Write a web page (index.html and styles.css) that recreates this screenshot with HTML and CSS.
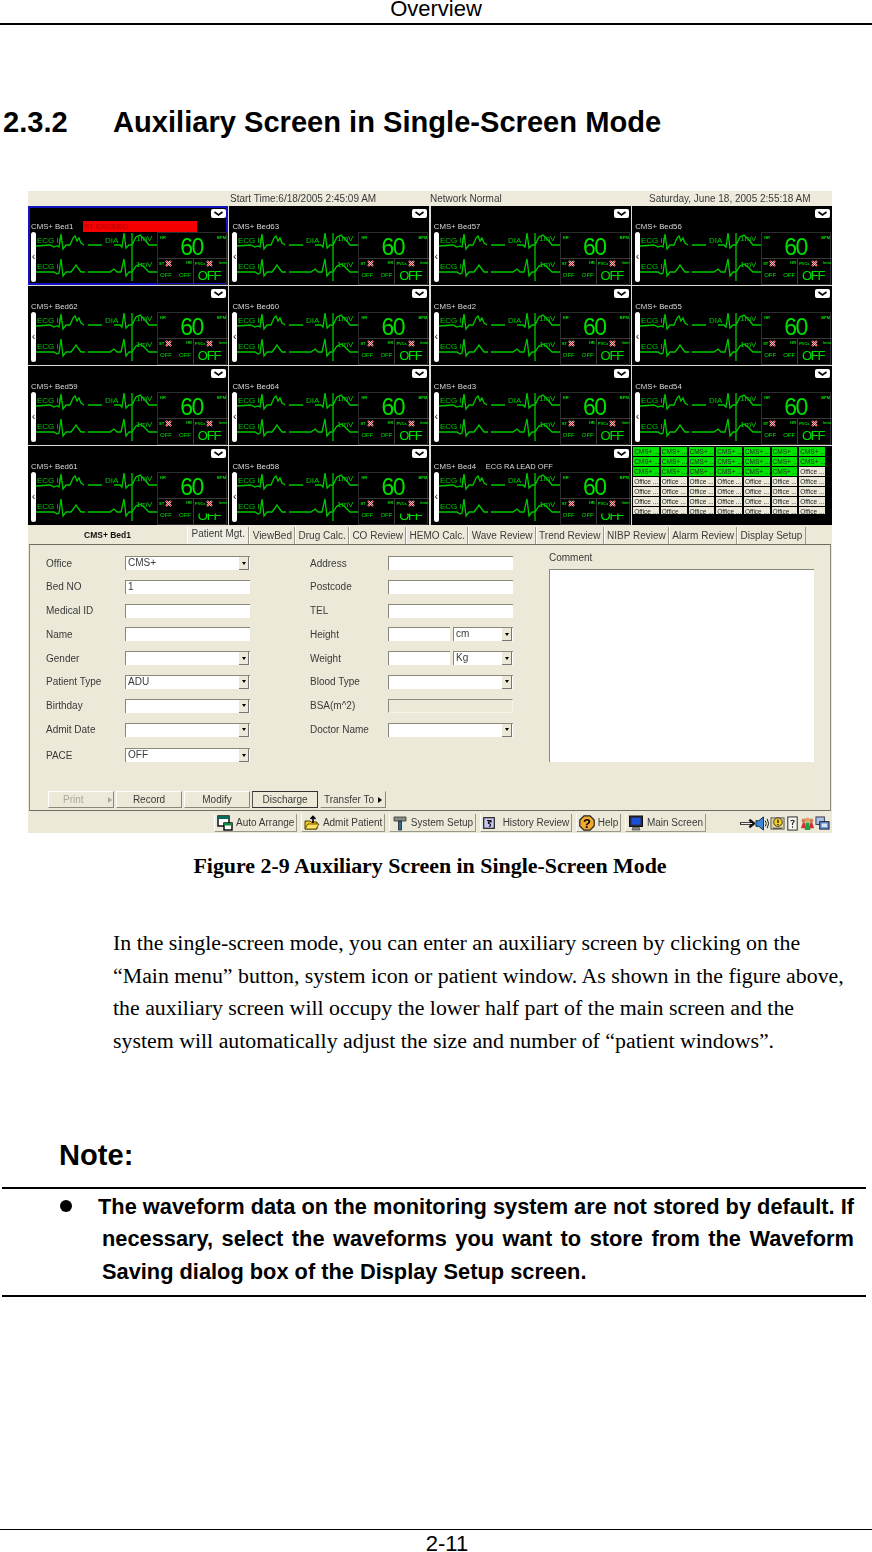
FILE: index.html
```html
<!DOCTYPE html>
<html lang="en">
<head>
    <meta charset="UTF-8">
    <meta name="viewport" content="width=device-width, initial-scale=1.0">
    <title>Overview</title>
    <link rel="stylesheet" href="styles.css">
</head>
<body>
    <svg class="defs" width="0" height="0">
        <symbol id="ecg" viewBox="0 0 121 50">
            <path d="M0 14L14 13L18 15L21 14L23 15L25 2L27 17L30 13L34 13L37 6L39 4L41 9L43 6L45 11L48 13M52 13L66 13M78 13L84 13L86 15L88 1L90 16L93 13L96 13L100 5L104 3L109 8L113 13L121 13M0 40L18 40L21 42L23 41L25 27L27 44L30 40L35 40L38 36L40 33L42 36L45 40L49 40M52 40L74 40L78 37L81 40L85 40L88 27L90 44L93 40L96 40L100 34L104 32L108 35L113 40L121 40M96 1V49" fill="none" stroke="#00c800" stroke-width="1.3"/>
        </symbol>
        <symbol id="chev" viewBox="0 0 15 9">
            <rect width="15" height="9" rx="2" fill="#fff"/>
            <path d="M3.5 3L7.5 6L11.5 3" fill="none" stroke="#000" stroke-width="1.6"/>
        </symbol>
        <symbol id="x" viewBox="0 0 7 7">
            <path d="M1 1L6 6M6 1L1 6" stroke="#f4c8c8" stroke-width="2"/>
            <path d="M1 1L6 6M6 1L1 6" stroke="#e02020" stroke-width="1"/>
        </symbol>
    </svg>

    <header class="page-head">Overview</header>

    <h2 class="section-title"><span class="section-num">2.3.2</span><span>Auxiliary Screen in Single-Screen Mode</span></h2>

    <div class="shot">
        <div class="shot-top">
            <span></span>
            <span>Start Time:6/18/2005 2:45:09 AM</span>
            <span>Network Normal</span>
            <span>Saturday, June 18, 2005 2:55:18 AM</span>
        </div>

        <div class="beds">
            <div class="tile sel">
                <svg class="chev"><use href="#chev"/></svg>
                <div class="tile-name"><span>CMS+ Bed1</span><span class="alert">ST EXCEED</span></div>
                <div class="tile-body"><div class="pill">‹</div><svg class="wave" viewBox="0 0 121 50"><use href="#ecg"/><text x="1" y="11">ECG II</text><text x="69" y="11">DIA</text><text x="100" y="9">1mV</text><text x="1" y="37">ECG I</text><text x="100" y="35">1mV</text></svg>
                <div class="vitals"><div class="hr"><i>HR</i><b>60</b><i>BPM</i></div><div class="low"><p><i>ST<svg class="x"><use href="#x"/></svg></i><i>HR</i></p><p><span>OFF</span><span>OFF</span></p></div><div class="low"><p><i>PVCs<svg class="x"><use href="#x"/></svg></i><i>/min</i></p><strong>OFF</strong></div></div></div>
            </div>
            <div class="tile">
                <svg class="chev"><use href="#chev"/></svg>
                <div class="tile-name"><span>CMS+ Bed63</span></div>
                <div class="tile-body"><div class="pill">‹</div><svg class="wave" viewBox="0 0 121 50"><use href="#ecg"/><text x="1" y="11">ECG II</text><text x="69" y="11">DIA</text><text x="100" y="9">1mV</text><text x="1" y="37">ECG I</text><text x="100" y="35">1mV</text></svg>
                <div class="vitals"><div class="hr"><i>HR</i><b>60</b><i>BPM</i></div><div class="low"><p><i>ST<svg class="x"><use href="#x"/></svg></i><i>HR</i></p><p><span>OFF</span><span>OFF</span></p></div><div class="low"><p><i>PVCs<svg class="x"><use href="#x"/></svg></i><i>/min</i></p><strong>OFF</strong></div></div></div>
            </div>
            <div class="tile">
                <svg class="chev"><use href="#chev"/></svg>
                <div class="tile-name"><span>CMS+ Bed57</span></div>
                <div class="tile-body"><div class="pill">‹</div><svg class="wave" viewBox="0 0 121 50"><use href="#ecg"/><text x="1" y="11">ECG II</text><text x="69" y="11">DIA</text><text x="100" y="9">1mV</text><text x="1" y="37">ECG I</text><text x="100" y="35">1mV</text></svg>
                <div class="vitals"><div class="hr"><i>HR</i><b>60</b><i>BPM</i></div><div class="low"><p><i>ST<svg class="x"><use href="#x"/></svg></i><i>HR</i></p><p><span>OFF</span><span>OFF</span></p></div><div class="low"><p><i>PVCs<svg class="x"><use href="#x"/></svg></i><i>/min</i></p><strong>OFF</strong></div></div></div>
            </div>
            <div class="tile">
                <svg class="chev"><use href="#chev"/></svg>
                <div class="tile-name"><span>CMS+ Bed56</span></div>
                <div class="tile-body"><div class="pill">‹</div><svg class="wave" viewBox="0 0 121 50"><use href="#ecg"/><text x="1" y="11">ECG II</text><text x="69" y="11">DIA</text><text x="100" y="9">1mV</text><text x="1" y="37">ECG I</text><text x="100" y="35">1mV</text></svg>
                <div class="vitals"><div class="hr"><i>HR</i><b>60</b><i>BPM</i></div><div class="low"><p><i>ST<svg class="x"><use href="#x"/></svg></i><i>HR</i></p><p><span>OFF</span><span>OFF</span></p></div><div class="low"><p><i>PVCs<svg class="x"><use href="#x"/></svg></i><i>/min</i></p><strong>OFF</strong></div></div></div>
            </div>

            <div class="tile">
                <svg class="chev"><use href="#chev"/></svg>
                <div class="tile-name"><span>CMS+ Bed62</span></div>
                <div class="tile-body"><div class="pill">‹</div><svg class="wave" viewBox="0 0 121 50"><use href="#ecg"/><text x="1" y="11">ECG II</text><text x="69" y="11">DIA</text><text x="100" y="9">1mV</text><text x="1" y="37">ECG I</text><text x="100" y="35">1mV</text></svg>
                <div class="vitals"><div class="hr"><i>HR</i><b>60</b><i>BPM</i></div><div class="low"><p><i>ST<svg class="x"><use href="#x"/></svg></i><i>HR</i></p><p><span>OFF</span><span>OFF</span></p></div><div class="low"><p><i>PVCs<svg class="x"><use href="#x"/></svg></i><i>/min</i></p><strong>OFF</strong></div></div></div>
            </div>
            <div class="tile">
                <svg class="chev"><use href="#chev"/></svg>
                <div class="tile-name"><span>CMS+ Bed60</span></div>
                <div class="tile-body"><div class="pill">‹</div><svg class="wave" viewBox="0 0 121 50"><use href="#ecg"/><text x="1" y="11">ECG II</text><text x="69" y="11">DIA</text><text x="100" y="9">1mV</text><text x="1" y="37">ECG I</text><text x="100" y="35">1mV</text></svg>
                <div class="vitals"><div class="hr"><i>HR</i><b>60</b><i>BPM</i></div><div class="low"><p><i>ST<svg class="x"><use href="#x"/></svg></i><i>HR</i></p><p><span>OFF</span><span>OFF</span></p></div><div class="low"><p><i>PVCs<svg class="x"><use href="#x"/></svg></i><i>/min</i></p><strong>OFF</strong></div></div></div>
            </div>
            <div class="tile">
                <svg class="chev"><use href="#chev"/></svg>
                <div class="tile-name"><span>CMS+ Bed2</span></div>
                <div class="tile-body"><div class="pill">‹</div><svg class="wave" viewBox="0 0 121 50"><use href="#ecg"/><text x="1" y="11">ECG II</text><text x="69" y="11">DIA</text><text x="100" y="9">1mV</text><text x="1" y="37">ECG I</text><text x="100" y="35">1mV</text></svg>
                <div class="vitals"><div class="hr"><i>HR</i><b>60</b><i>BPM</i></div><div class="low"><p><i>ST<svg class="x"><use href="#x"/></svg></i><i>HR</i></p><p><span>OFF</span><span>OFF</span></p></div><div class="low"><p><i>PVCs<svg class="x"><use href="#x"/></svg></i><i>/min</i></p><strong>OFF</strong></div></div></div>
            </div>
            <div class="tile">
                <svg class="chev"><use href="#chev"/></svg>
                <div class="tile-name"><span>CMS+ Bed55</span></div>
                <div class="tile-body"><div class="pill">‹</div><svg class="wave" viewBox="0 0 121 50"><use href="#ecg"/><text x="1" y="11">ECG II</text><text x="69" y="11">DIA</text><text x="100" y="9">1mV</text><text x="1" y="37">ECG I</text><text x="100" y="35">1mV</text></svg>
                <div class="vitals"><div class="hr"><i>HR</i><b>60</b><i>BPM</i></div><div class="low"><p><i>ST<svg class="x"><use href="#x"/></svg></i><i>HR</i></p><p><span>OFF</span><span>OFF</span></p></div><div class="low"><p><i>PVCs<svg class="x"><use href="#x"/></svg></i><i>/min</i></p><strong>OFF</strong></div></div></div>
            </div>

            <div class="tile">
                <svg class="chev"><use href="#chev"/></svg>
                <div class="tile-name"><span>CMS+ Bed59</span></div>
                <div class="tile-body"><div class="pill">‹</div><svg class="wave" viewBox="0 0 121 50"><use href="#ecg"/><text x="1" y="11">ECG II</text><text x="69" y="11">DIA</text><text x="100" y="9">1mV</text><text x="1" y="37">ECG I</text><text x="100" y="35">1mV</text></svg>
                <div class="vitals"><div class="hr"><i>HR</i><b>60</b><i>BPM</i></div><div class="low"><p><i>ST<svg class="x"><use href="#x"/></svg></i><i>HR</i></p><p><span>OFF</span><span>OFF</span></p></div><div class="low"><p><i>PVCs<svg class="x"><use href="#x"/></svg></i><i>/min</i></p><strong>OFF</strong></div></div></div>
            </div>
            <div class="tile">
                <svg class="chev"><use href="#chev"/></svg>
                <div class="tile-name"><span>CMS+ Bed64</span></div>
                <div class="tile-body"><div class="pill">‹</div><svg class="wave" viewBox="0 0 121 50"><use href="#ecg"/><text x="1" y="11">ECG II</text><text x="69" y="11">DIA</text><text x="100" y="9">1mV</text><text x="1" y="37">ECG I</text><text x="100" y="35">1mV</text></svg>
                <div class="vitals"><div class="hr"><i>HR</i><b>60</b><i>BPM</i></div><div class="low"><p><i>ST<svg class="x"><use href="#x"/></svg></i><i>HR</i></p><p><span>OFF</span><span>OFF</span></p></div><div class="low"><p><i>PVCs<svg class="x"><use href="#x"/></svg></i><i>/min</i></p><strong>OFF</strong></div></div></div>
            </div>
            <div class="tile">
                <svg class="chev"><use href="#chev"/></svg>
                <div class="tile-name"><span>CMS+ Bed3</span></div>
                <div class="tile-body"><div class="pill">‹</div><svg class="wave" viewBox="0 0 121 50"><use href="#ecg"/><text x="1" y="11">ECG II</text><text x="69" y="11">DIA</text><text x="100" y="9">1mV</text><text x="1" y="37">ECG I</text><text x="100" y="35">1mV</text></svg>
                <div class="vitals"><div class="hr"><i>HR</i><b>60</b><i>BPM</i></div><div class="low"><p><i>ST<svg class="x"><use href="#x"/></svg></i><i>HR</i></p><p><span>OFF</span><span>OFF</span></p></div><div class="low"><p><i>PVCs<svg class="x"><use href="#x"/></svg></i><i>/min</i></p><strong>OFF</strong></div></div></div>
            </div>
            <div class="tile">
                <svg class="chev"><use href="#chev"/></svg>
                <div class="tile-name"><span>CMS+ Bed54</span></div>
                <div class="tile-body"><div class="pill">‹</div><svg class="wave" viewBox="0 0 121 50"><use href="#ecg"/><text x="1" y="11">ECG II</text><text x="69" y="11">DIA</text><text x="100" y="9">1mV</text><text x="1" y="37">ECG I</text><text x="100" y="35">1mV</text></svg>
                <div class="vitals"><div class="hr"><i>HR</i><b>60</b><i>BPM</i></div><div class="low"><p><i>ST<svg class="x"><use href="#x"/></svg></i><i>HR</i></p><p><span>OFF</span><span>OFF</span></p></div><div class="low"><p><i>PVCs<svg class="x"><use href="#x"/></svg></i><i>/min</i></p><strong>OFF</strong></div></div></div>
            </div>

            <div class="tile">
                <svg class="chev"><use href="#chev"/></svg>
                <div class="tile-name"><span>CMS+ Bed61</span></div>
                <div class="tile-body"><div class="pill">‹</div><svg class="wave" viewBox="0 0 121 50"><use href="#ecg"/><text x="1" y="11">ECG II</text><text x="69" y="11">DIA</text><text x="100" y="9">1mV</text><text x="1" y="37">ECG I</text><text x="100" y="35">1mV</text></svg>
                <div class="vitals cut"><div class="hr"><i>HR</i><b>60</b><i>BPM</i></div><div class="low"><p><i>ST<svg class="x"><use href="#x"/></svg></i><i>HR</i></p><p><span>OFF</span><span>OFF</span></p></div><div class="low"><p><i>PVCs<svg class="x"><use href="#x"/></svg></i><i>/min</i></p><strong>OFF</strong></div></div></div>
            </div>
            <div class="tile">
                <svg class="chev"><use href="#chev"/></svg>
                <div class="tile-name"><span>CMS+ Bed58</span></div>
                <div class="tile-body"><div class="pill">‹</div><svg class="wave" viewBox="0 0 121 50"><use href="#ecg"/><text x="1" y="11">ECG II</text><text x="69" y="11">DIA</text><text x="100" y="9">1mV</text><text x="1" y="37">ECG I</text><text x="100" y="35">1mV</text></svg>
                <div class="vitals cut"><div class="hr"><i>HR</i><b>60</b><i>BPM</i></div><div class="low"><p><i>ST<svg class="x"><use href="#x"/></svg></i><i>HR</i></p><p><span>OFF</span><span>OFF</span></p></div><div class="low"><p><i>PVCs<svg class="x"><use href="#x"/></svg></i><i>/min</i></p><strong>OFF</strong></div></div></div>
            </div>
            <div class="tile">
                <svg class="chev"><use href="#chev"/></svg>
                <div class="tile-name"><span>CMS+ Bed4</span><span class="lead-off">ECG RA LEAD OFF</span></div>
                <div class="tile-body"><div class="pill">‹</div><svg class="wave" viewBox="0 0 121 50"><use href="#ecg"/><text x="1" y="11">ECG II</text><text x="69" y="11">DIA</text><text x="100" y="9">1mV</text><text x="1" y="37">ECG I</text><text x="100" y="35">1mV</text></svg>
                <div class="vitals cut"><div class="hr"><i>HR</i><b>60</b><i>BPM</i></div><div class="low"><p><i>ST<svg class="x"><use href="#x"/></svg></i><i>HR</i></p><p><span>OFF</span><span>OFF</span></p></div><div class="low"><p><i>PVCs<svg class="x"><use href="#x"/></svg></i><i>/min</i></p><strong>OFF</strong></div></div></div>
            </div>
            <div class="tile bed-list">
                <span class="on">CMS+ ...</span><span class="on">CMS+ ...</span><span class="on">CMS+ ...</span><span class="on">CMS+ ...</span><span class="on">CMS+ ...</span><span class="on">CMS+ ...</span><span class="on">CMS+ ...</span>
                <span class="on">CMS+ ...</span><span class="on">CMS+ ...</span><span class="on">CMS+ ...</span><span class="on">CMS+ ...</span><span class="on">CMS+ ...</span><span class="on">CMS+ ...</span><span class="on">CMS+ ...</span>
                <span class="on">CMS+ ...</span><span class="on">CMS+ ...</span><span class="on">CMS+ ...</span><span class="on">CMS+ ...</span><span class="on">CMS+ ...</span><span class="on">CMS+ ...</span><span>Office ...</span>
                <span>Office ...</span><span>Office ...</span><span>Office ...</span><span>Office ...</span><span>Office ...</span><span>Office ...</span><span>Office ...</span>
                <span>Office ...</span><span>Office ...</span><span>Office ...</span><span>Office ...</span><span>Office ...</span><span>Office ...</span><span>Office ...</span>
                <span>Office ...</span><span>Office ...</span><span>Office ...</span><span>Office ...</span><span>Office ...</span><span>Office ...</span><span>Office ...</span>
                <span>Office ...</span><span>Office ...</span><span>Office ...</span><span>Office ...</span><span>Office ...</span><span>Office ...</span><span>Office ...</span>
            </div>
        </div>

        <div class="tabs">
            <div class="tabs-title">CMS+ Bed1</div>
            <div class="tab active">Patient Mgt.</div>
            <div class="tab">ViewBed</div>
            <div class="tab">Drug Calc.</div>
            <div class="tab">CO Review</div>
            <div class="tab">HEMO Calc.</div>
            <div class="tab">Wave Review</div>
            <div class="tab">Trend Review</div>
            <div class="tab">NIBP Review</div>
            <div class="tab">Alarm Review</div>
            <div class="tab">Display Setup</div>
        </div>

        <div class="panel">
            <div class="form-area">
                <div class="fields left-fields">
                    <label>Office</label><div class="field"><span>CMS+</span><u></u></div>
                    <label>Bed NO</label><div class="field"><span>1</span></div>
                    <label>Medical ID</label><div class="field"></div>
                    <label>Name</label><div class="field"></div>
                    <label>Gender</label><div class="field"><span></span><u></u></div>
                    <label>Patient Type</label><div class="field"><span>ADU</span><u></u></div>
                    <label>Birthday</label><div class="field"><span></span><u></u></div>
                    <label>Admit Date</label><div class="field"><span></span><u></u></div>
                    <label class="pace">PACE</label><div class="field pace"><span>OFF</span><u></u></div>
                </div>
                <div class="fields right-fields">
                    <label>Address</label><div class="field"></div>
                    <label>Postcode</label><div class="field"></div>
                    <label>TEL</label><div class="field"></div>
                    <label>Height</label><div class="pair"><div class="field"></div><div class="field"><span>cm</span><u></u></div></div>
                    <label>Weight</label><div class="pair"><div class="field"></div><div class="field"><span>Kg</span><u></u></div></div>
                    <label>Blood Type</label><div class="field"><span></span><u></u></div>
                    <label>BSA(m^2)</label><div class="field off"></div>
                    <label>Doctor Name</label><div class="field"><span></span><u></u></div>
                </div>
                <div class="comment">
                    <label>Comment</label>
                    <div class="comment-box"></div>
                </div>
            </div>
            <div class="actions">
                <div class="btn off"><span>Print</span><u></u></div>
                <div class="btn">Record</div>
                <div class="btn">Modify</div>
                <div class="btn default">Discharge</div>
                <div class="btn flat"><span>Transfer To</span><u></u></div>
            </div>
        </div>

        <div class="toolbar">
            <div class="tool">
                <svg class="ico" viewBox="0 0 16 16"><rect x="1" y="1" width="11" height="10" fill="#fff" stroke="#000" stroke-width="1.4"/><rect x="1" y="1" width="11" height="3" fill="#0a6a5a"/><rect x="7" y="8" width="8" height="7" fill="#fff" stroke="#000" stroke-width="1.4"/><rect x="7" y="8" width="8" height="2.5" fill="#0a8a3a"/></svg>
                <span>Auto Arrange</span>
            </div>
            <div class="tool">
                <svg class="ico" viewBox="0 0 16 16"><path d="M1 14V6h5l1 1h6v7z" fill="#f2c81e" stroke="#4a3a00"/><path d="M1 14l3-5h11l-3 5z" fill="#ffe35a" stroke="#4a3a00" stroke-width=".8"/><path d="M9 8V2M6.5 4L9 1.5 11.5 4" fill="none" stroke="#000" stroke-width="1.6"/></svg>
                <span>Admit Patient</span>
            </div>
            <div class="tool">
                <svg class="ico" viewBox="0 0 16 16"><path d="M2 2h12v4H2z" fill="#8a8a84" stroke="#333" stroke-width=".8"/><path d="M6.5 6h3v9h-3z" fill="#2a7090" stroke="#123" stroke-width=".8"/></svg>
                <span>System Setup</span>
            </div>
            <div class="tool hist">
                <svg class="ico small" viewBox="0 0 12 12"><rect x=".7" y=".7" width="10.6" height="10.6" fill="#c8c8f0" stroke="#222" stroke-width="1.2"/><path d="M4 3.5h4v1.4H5.5v1.6c2.4 0 2.8 2.8.4 3" fill="none" stroke="#111" stroke-width="1.2"/></svg>
                <span>History Review</span>
            </div>
            <div class="tool">
                <svg class="ico" viewBox="0 0 16 16"><path d="M5 .8h6L15.2 5v6L11 15.2H5L.8 11V5z" fill="#f0a830" stroke="#222" stroke-width="1.2"/><text class="qm" x="8" y="12.5">?</text></svg>
                <span>Help</span>
            </div>
            <div class="tool">
                <svg class="ico" viewBox="0 0 16 16"><rect x="1.5" y="1" width="13" height="10.5" fill="#2a2a40" stroke="#111"/><rect x="3.5" y="2.8" width="9" height="6.8" fill="#1a50d8"/><path d="M5 12h6l1 3H4z" fill="#8a8a84" stroke="#333" stroke-width=".6"/></svg>
                <span>Main Screen</span>
            </div>
            <div class="tray">
                <svg class="ico" viewBox="0 0 16 16"><path d="M0 8h14M10 4l5 4-5 4" fill="none" stroke="#111" stroke-width="2.5"/><path d="M1 8h12" stroke="#fff" stroke-width="1"/></svg>
                <svg class="ico" viewBox="0 0 16 16"><path d="M1 5h3l5-4v14l-5-4H1z" fill="#3a8ae0" stroke="#123"/><path d="M11 5q2 3 0 6M13 3q3 5 0 10" fill="none" stroke="#111"/></svg>
                <svg class="ico" viewBox="0 0 16 16"><rect x="1" y="2" width="14" height="12" fill="#d8d0a0" stroke="#555"/><circle cx="8.5" cy="6.5" r="4.5" fill="#f4d020" stroke="#333"/><path d="M8.5 4v3.5M8.5 8.5v1" stroke="#000" stroke-width="1.3"/><path d="M3 13h10" stroke="#333"/></svg>
                <svg class="ico" viewBox="0 0 16 16"><rect x="3" y="1" width="10" height="14" fill="#f4f4f0" stroke="#222"/><path d="M6 5.5q2-2 4 0l-2 2.5v1.5M8 11v1.5" fill="none" stroke="#222" stroke-width="1.1"/></svg>
                <svg class="ico" viewBox="0 0 16 16"><circle cx="4" cy="5" r="2.3" fill="#d08050"/><circle cx="12" cy="5" r="2.3" fill="#d08050"/><circle cx="8" cy="4" r="2.5" fill="#e0a070"/><path d="M1 13l2-6h2l1 6zM10 13l1-6h2l2 6z" fill="#d03030"/><path d="M5 15l1-8h4l1 8z" fill="#20a040"/></svg>
                <svg class="ico" viewBox="0 0 16 16"><rect x="1" y="1" width="9" height="8" fill="#a8c0e8" stroke="#334"/><rect x="5" y="6" width="10" height="8" fill="#5a88d0" stroke="#223"/><rect x="7" y="8" width="6" height="4" fill="#d8e4f4"/></svg>
            </div>
        </div>
    </div>

    <p class="caption">Figure 2-9 Auxiliary Screen in Single-Screen Mode</p>

    <p class="body-text">In the single-screen mode, you can enter an auxiliary screen by clicking on the “Main menu” button, system icon or patient window. As shown in the figure above, the auxiliary screen will occupy the lower half part of the main screen and the system will automatically adjust the size and number of “patient windows”.</p>

    <h3 class="note-title">Note:</h3>
    <div class="note-box">
        <p class="note-item">The waveform data on the monitoring system are not stored by default. If necessary, select the waveforms you want to store from the Waveform Saving dialog box of the Display Setup screen.</p>
    </div>

    <footer class="page-foot">2-11</footer>
</body>
</html>
```

FILE: styles.css
```css
* {
    box-sizing: border-box;
}
html, body {
    margin: 0;
    height: 1552px;
    overflow: hidden;
}
body {
    display: flex;
    flex-direction: column;
    background: #fff;
    color: #000;
    font-family: "Liberation Sans", Arial, sans-serif;
}
.defs {
    display: block;
    height: 0;
}

/* document text */
.page-head {
    height: 25px;
    border-bottom: 2px solid #000;
    font-size: 22px;
    line-height: 18px;
    text-align: center;
}
.section-title {
    display: flex;
    margin: 80px 0 0 3px;
    font-size: 29.1px;
    line-height: 34px;
}
.section-num {
    width: 110px;
}
.caption {
    margin: 21px 0 0;
    width: 860px;
    font-family: "Liberation Serif", "Times New Roman", serif;
    font-size: 21.9px;
    font-weight: bold;
    line-height: 24px;
    text-align: center;
}
.body-text {
    margin: 49px 0 0 113px;
    width: 737px;
    font-family: "Liberation Serif", "Times New Roman", serif;
    font-size: 21.87px;
    line-height: 32.7px;
}
.note-title {
    margin: 80px 0 0 59px;
    font-size: 29.1px;
    line-height: 34px;
}
.note-box {
    margin: 15px 0 0 2px;
    width: 864px;
    height: 110px;
    padding-top: 2px;
    border-top: 2px solid #000;
    border-bottom: 2px solid #000;
}
.note-item {
    margin: 0 0 0 100px;
    width: 752px;
    font-size: 21.8px;
    font-weight: bold;
    line-height: 32.5px;
    text-align: justify;
    text-indent: -42px;
}
.note-item::before {
    content: "";
    display: inline-block;
    width: 12px;
    height: 12px;
    margin-right: 26px;
    border-radius: 50%;
    background: #000;
    vertical-align: 2px;
}
.page-foot {
    margin-top: auto;
    height: 23px;
    padding-left: 22px;
    border-top: 1px solid #000;
    font-size: 22px;
    line-height: 28px;
    text-align: center;
}

/* embedded monitor screenshot */
.shot {
    flex: none;
    margin: 52px 0 0 28px;
    width: 804px;
    height: 642px;
    display: flex;
    flex-direction: column;
    background: #ece9d8;
    color: #3a3a3a;
    font-size: 10px;
    filter: blur(0.5px);
}
.shot-top {
    display: grid;
    grid-template-columns: 202px 200px 219px 1fr;
    height: 15px;
    background: #eeebdc;
    line-height: 15px;
}
.beds {
    display: grid;
    grid-template-columns: repeat(4, 1fr);
    grid-template-rows: repeat(4, 1fr);
    gap: 1.5px;
    height: 319px;
    background: #dcdcd6;
}
.tile {
    display: flex;
    flex-direction: column;
    padding: 3px 2px 0 3px;
    background: #000;
    overflow: hidden;
}
.tile.sel {
    box-shadow: inset 0 0 0 2px #1212c0;
}
.chev {
    align-self: flex-end;
    display: block;
    flex: none;
    width: 15px;
    height: 9px;
}
.tile-name {
    display: flex;
    align-items: center;
    flex: none;
    height: 12px;
    margin-top: 2px;
    color: #d8d8d8;
    font-size: 7.8px;
    white-space: nowrap;
}
.tile-name span:first-child {
    width: 52px;
}
.alert {
    width: 114px;
    height: 11px;
    padding-left: 1px;
    background: #f40000;
    color: #a80000;
    line-height: 11px;
}
.lead-off {
    font-size: 7.5px;
}
.tile-body {
    display: grid;
    grid-template-columns: 5px 121px 70px;
    height: 51px;
}
.pill {
    height: 50px;
    border-radius: 3px;
    background: #fff;
    color: #222;
    font-size: 11px;
    line-height: 48px;
    text-align: center;
}
.wave {
    display: block;
    width: 121px;
    height: 50px;
}
.wave text {
    fill: #00c800;
    font-size: 8px;
}
.vitals {
    display: grid;
    grid-template-columns: 35px 35px;
    grid-template-rows: 26px 25px;
    border: 1px solid #2c2c2c;
    color: #00e000;
}
.hr {
    grid-column: 1 / 3;
    display: flex;
    justify-content: space-between;
    padding: 2px 2px 0;
    border-bottom: 1px solid #3a3a3a;
}
.vitals i {
    font-size: 4px;
    font-style: normal;
    font-weight: bold;
    line-height: 6px;
}
.hr b {
    margin-top: 3px;
    font-size: 23px;
    font-weight: normal;
    letter-spacing: -1.5px;
    line-height: 19px;
}
.low {
    display: flex;
    flex-direction: column;
    padding: 0 1px;
    overflow: hidden;
}
.low + .low {
    border-left: 1px solid #3a3a3a;
}
.low p {
    display: flex;
    justify-content: space-between;
    align-items: center;
    margin: 0;
    height: 8px;
    font-size: 6px;
}
.low p + p {
    margin-top: 4px;
    padding: 0 1px;
}
.x {
    width: 7px;
    height: 7px;
    margin-left: 1px;
    vertical-align: middle;
}
.low strong {
    margin-top: 2px;
    padding-right: 4px;
    font-size: 13px;
    font-weight: normal;
    letter-spacing: -1.2px;
    line-height: 14px;
    text-align: center;
}
.cut strong {
    clip-path: inset(4px 0 0 0);
}
.bed-list {
    display: grid;
    grid-template-columns: repeat(7, 25.7px);
    grid-template-rows: repeat(6, 9px) 7px;
    gap: 1px 2px;
    padding: 1px;
    align-content: start;
}
.bed-list span {
    padding-left: 1px;
    background: #ece9d8;
    color: #222;
    font-size: 6.5px;
    line-height: 9px;
    overflow: hidden;
    white-space: nowrap;
}
.bed-list .on {
    background: #00e400;
}

/* tabs */
.tabs {
    display: flex;
    height: 19px;
    padding-top: 2px;
}
.tabs-title {
    width: 159px;
    color: #111;
    font-size: 8.5px;
    font-weight: bold;
    line-height: 17px;
    text-align: center;
}
.tab {
    padding: 0 2.3px;
    border-left: 1px solid #fff;
    border-right: 1px solid #9a988a;
    line-height: 17px;
    white-space: nowrap;
}
.tab.active {
    padding: 0 3.5px;
    background: #f0eee2;
    line-height: 13px;
}

/* patient panel */
.panel {
    display: flex;
    flex-direction: column;
    flex: none;
    margin-left: 1px;
    width: 802px;
    height: 267px;
    border: 1px solid #8a887a;
    border-top-color: #6e6c60;
    border-bottom-color: #6e6c60;
}
.form-area {
    display: flex;
    padding: 6px 0 0 16px;
}
.fields {
    display: grid;
    grid-template-columns: 79px 125px;
    grid-auto-rows: 14px;
    row-gap: 9.8px;
    margin-top: 5px;
    align-items: center;
}
.fields label {
    white-space: nowrap;
}
.left-fields .pace {
    position: relative;
    top: 2px;
}
.right-fields {
    margin-left: 60px;
    grid-template-columns: 78px 125px;
}
.field {
    display: flex;
    justify-content: space-between;
    height: 14px;
    padding: 0 1px 0 2px;
    background: #fff;
    border-top: 1px solid #8a887a;
    border-left: 1px solid #8a887a;
    line-height: 12px;
    overflow: hidden;
}
.field.off {
    background: #ece9d8;
    border-right: 1px solid #f6f4ea;
    border-bottom: 1px solid #f6f4ea;
}
.field u {
    display: flex;
    align-items: center;
    justify-content: center;
    width: 10px;
    background: #ece9d8;
    border-right: 1px solid #777;
    border-bottom: 1px solid #777;
    text-decoration: none;
}
.field u::before {
    content: "";
    border: 2.5px solid transparent;
    border-top: 3px solid #000;
    border-bottom: 0;
}
.pair {
    display: grid;
    grid-template-columns: 62px 60px;
    column-gap: 3px;
}
.comment {
    margin-left: 36px;
    width: 265px;
}
.comment label {
    display: block;
    height: 18px;
    line-height: 13px;
}
.comment-box {
    height: 193px;
    background: #fff;
    border-top: 1px solid #8a887a;
    border-left: 1px solid #8a887a;
}

/* action buttons */
.actions {
    display: grid;
    grid-template-columns: repeat(5, 66px);
    column-gap: 2px;
    margin: auto 0 2px 18px;
}
.btn {
    display: flex;
    align-items: center;
    justify-content: center;
    height: 17px;
    background: #ece9d8;
    border: 1px solid;
    border-color: #fff #8a887a #8a887a #fff;
}
.btn u {
    border: 3px solid transparent;
    border-left: 4px solid #000;
    border-right: 0;
    margin-left: 4px;
}
.btn.off {
    justify-content: space-between;
    padding: 0 1px 0 14px;
    color: #aaa89c;
}
.btn.off u {
    border-left-color: #aaa89c;
}
.btn.default {
    border-color: #333 #333 #333 #555;
}
.btn.flat {
    border-color: #ece9d8 #8a887a #8a887a #ece9d8;
}

/* bottom toolbar */
.toolbar {
    display: flex;
    flex: 1;
    align-items: center;
    gap: 3.5px;
    padding: 2px 2px 0 186px;
}
.tool {
    display: flex;
    align-items: center;
    gap: 3px;
    height: 18px;
    padding: 0 2px;
    border-left: 1px solid #fff;
    border-right: 1px solid #9a988a;
    border-bottom: 1px solid #9a988a;
    white-space: nowrap;
}
.tool.hist {
    gap: 8px;
}
.ico {
    flex: none;
    display: block;
    width: 16px;
    height: 16px;
}
.ico.small {
    width: 12px;
    height: 12px;
}
.qm {
    fill: #000;
    font-size: 13px;
    font-weight: bold;
    text-anchor: middle;
}
.tray {
    display: flex;
    flex: none;
    margin-left: auto;
}
.tray .ico {
    width: 15px;
    height: 15px;
}
```
